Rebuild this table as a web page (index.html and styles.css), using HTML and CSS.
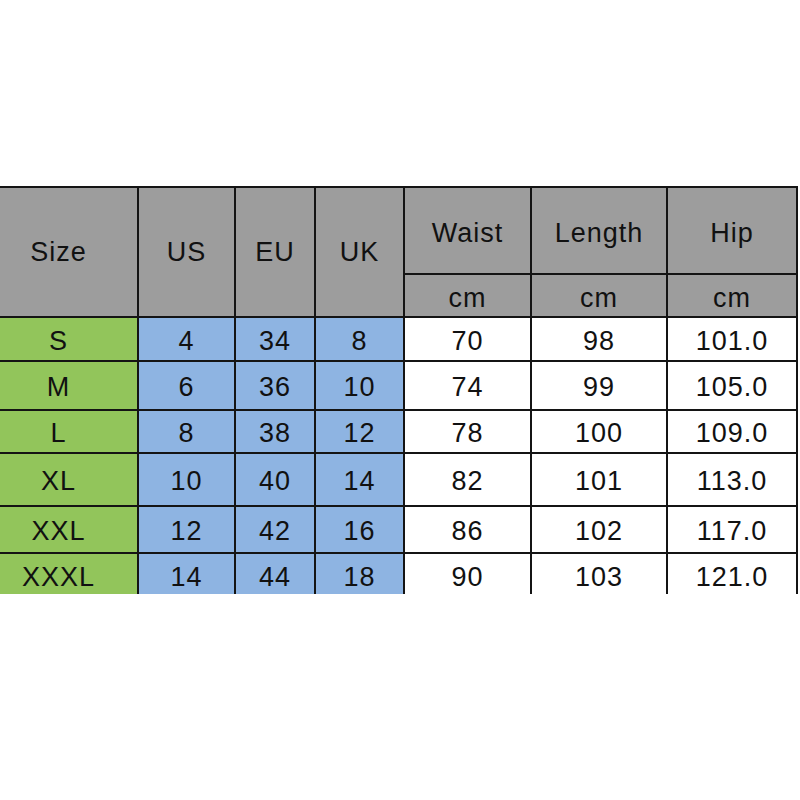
FILE: index.html
```html
<!DOCTYPE html>
<html>
<head>
<meta charset="utf-8">
<link rel="stylesheet" href="styles.css">
</head>
<body>
<div class="page">
<table class="chart">
  <colgroup>
    <col class="c-size"><col class="c-us"><col class="c-eu"><col class="c-uk"><col class="c-waist"><col class="c-length"><col class="c-hip">
  </colgroup>
  <thead>
    <tr class="h1">
      <th rowspan="2">Size</th>
      <th rowspan="2">US</th>
      <th rowspan="2">EU</th>
      <th rowspan="2">UK</th>
      <th class="top">Waist</th>
      <th class="top">Length</th>
      <th class="top">Hip</th>
    </tr>
    <tr class="h2">
      <th class="unit">cm</th>
      <th class="unit">cm</th>
      <th class="unit">cm</th>
    </tr>
  </thead>
  <tbody>
    <tr class="r1"><td class="sz">S</td><td class="bl">4</td><td class="bl">34</td><td class="bl">8</td><td>70</td><td>98</td><td>101.0</td></tr>
    <tr class="r2"><td class="sz">M</td><td class="bl">6</td><td class="bl">36</td><td class="bl">10</td><td>74</td><td>99</td><td>105.0</td></tr>
    <tr class="r3"><td class="sz">L</td><td class="bl">8</td><td class="bl">38</td><td class="bl">12</td><td>78</td><td>100</td><td>109.0</td></tr>
    <tr class="r4"><td class="sz">XL</td><td class="bl">10</td><td class="bl">40</td><td class="bl">14</td><td>82</td><td>101</td><td>113.0</td></tr>
    <tr class="r5"><td class="sz">XXL</td><td class="bl">12</td><td class="bl">42</td><td class="bl">16</td><td>86</td><td>102</td><td>117.0</td></tr>
    <tr class="r6 last"><td class="sz">XXXL</td><td class="bl">14</td><td class="bl">44</td><td class="bl">18</td><td>90</td><td>103</td><td>121.0</td></tr>
  </tbody>
</table>
</div>
</body>
</html>
```

FILE: styles.css
```css
html, body {
  margin: 0;
  padding: 0;
  background: #ffffff;
  overflow: hidden;
}
.page {
  padding-top: 186px;
}
.chart {
  border-collapse: collapse;
  table-layout: fixed;
  width: 817px;
  margin-left: -20px;
  font-family: "Liberation Sans", Arial, sans-serif;
  font-size: 27px;
  letter-spacing: 1px;
  color: #111111;
}
.c-size { width: 158px; }
.c-us { width: 97px; }
.c-eu { width: 80px; }
.c-uk { width: 89px; }
.c-waist { width: 127px; }
.c-length { width: 136px; }
.c-hip { width: 130px; }

.chart th, .chart td {
  border: 2px solid #141414;
  padding: 0;
  text-align: center;
  vertical-align: middle;
  font-weight: normal;
}
.chart th:first-child, .chart td:first-child {
  border-left: none;
}
.chart th {
  background: #9d9d9d;
}
.chart .top {
  padding-top: 5px;
}
.chart .unit {
  padding-top: 6px;
}
.chart td {
  background: #ffffff;
  padding-top: 4px;
}
.chart td.sz {
  background: #92c55b;
}
.chart td.bl {
  background: #8eb4e2;
}
.chart tr.last td {
  border-bottom: none;
  padding-top: 6px;
}
.h1 { height: 87px; }
.h2 { height: 43px; }
.r1 { height: 44px; }
.r2 { height: 49px; }
.r3 { height: 43px; }
.r4 { height: 53px; }
.r5 { height: 47px; }
.r6 { height: 41px; }
```
